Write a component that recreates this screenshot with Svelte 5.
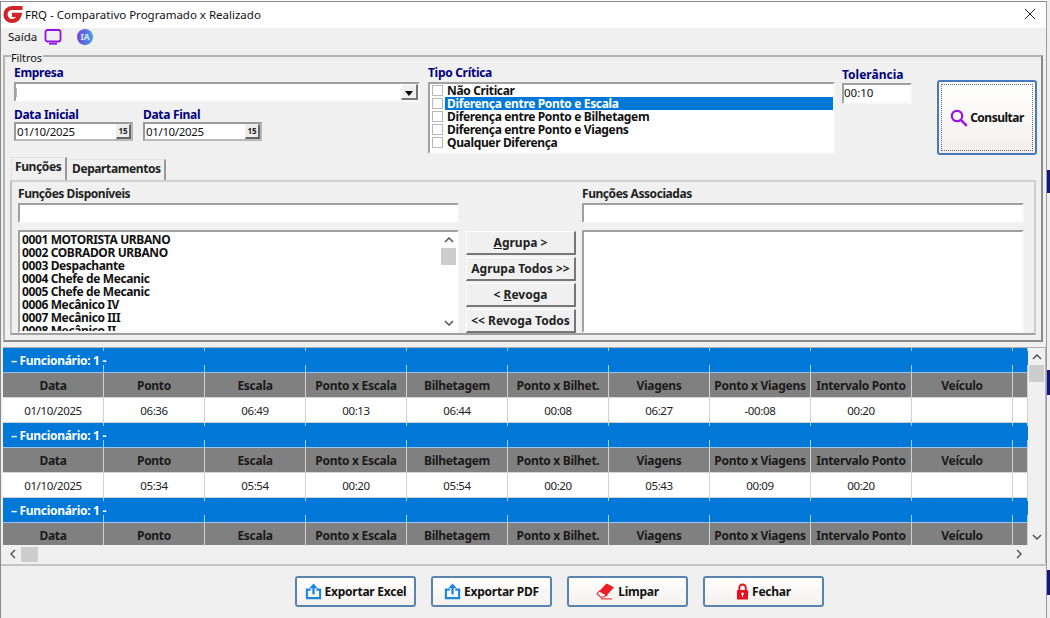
<script>
  const cols = ['Data','Ponto','Escala','Ponto x Escala','Bilhetagem','Ponto x Bilhet.','Viagens','Ponto x Viagens','Intervalo Ponto','Veículo',''];
  const groups = [
    ['01/10/2025','06:36','06:49','00:13','06:44','00:08','06:27','-00:08','00:20','',''],
    ['01/10/2025','05:34','05:54','00:20','05:54','00:20','05:43','00:09','00:20','',''],
    null
  ];
  const criticas = ['Não Criticar','Diferença entre Ponto e Escala','Diferença entre Ponto e Bilhetagem','Diferença entre Ponto e Viagens','Qualquer Diferença'];
  const funcoes = ['0001 MOTORISTA URBANO','0002 COBRADOR URBANO','0003 Despachante','0004 Chefe de Mecanic','0005 Chefe de Mecanic','0006 Mecânico IV','0007 Mecânico III','0008 Mecânico II'];
</script>

<div class="page">
<div class="window">
  <header class="title">
    <svg class="logo" viewBox="0 0 20 20" width="20" height="20"><path d="M19.500 4H9C5 4 2.500 6.800 2.500 10.500S5.500 17 9 17C13 17 15.500 14.500 16.500 10.800H9" fill="none" stroke="#d3232a" stroke-width="4.200"/></svg>
    <span>FRQ - Comparativo Programado x Realizado</span>
    <svg class="close" viewBox="0 0 12 12" width="12" height="12"><path d="M1 1l10 10M11 1L1 11" stroke="#222" stroke-width="1"/></svg>
  </header>

  <div class="toolbar">
    <span class="said">Saída</span>
    <svg viewBox="0 0 18 16" width="18" height="16"><rect x="1.500" y="1" width="15" height="11.500" rx="2" fill="none" stroke="#8f12e0" stroke-width="1.800"/><path d="M5 14.700h8" stroke="#8f12e0" stroke-width="1.800"/></svg>
    <span class="ia">IA</span>
  </div>

  <section class="filtros">
    <span class="legend">Filtros</span>
    <div class="top">
      <div class="col-a">
        <label class="lbl">Empresa</label>
        <div class="combo sunken"><span class="caret"></span><span class="arrow"></span></div>
        <div class="dates">
          <div>
            <label class="lbl">Data Inicial</label>
            <div class="date sunken"><span>01/10/2025</span><i>15</i></div>
          </div>
          <div>
            <label class="lbl">Data Final</label>
            <div class="date sunken"><span>01/10/2025</span><i>15</i></div>
          </div>
        </div>
      </div>
      <div class="col-b">
        <label class="lbl">Tipo Crítica</label>
        <div class="checks sunken">
          {#each criticas as c, i}
            <div class="chk"><b></b><span class:sel={i === 1}>{c}</span></div>
          {/each}
        </div>
      </div>
      <div class="col-c">
        <label class="lbl">Tolerância</label>
        <div class="tol sunken">00:10</div>
      </div>
      <button class="consultar">
        <span class="dots">
          <svg viewBox="0 0 18 18" width="18" height="18"><circle cx="7" cy="7" r="5.200" fill="none" stroke="#9a12e0" stroke-width="2.200"/><path d="M10.800 10.800l6 6" stroke="#9a12e0" stroke-width="2.500"/></svg>
          Consultar
        </span>
      </button>
    </div>

    <div class="tabs">
      <span class="tab on">Funções</span>
      <span class="tab">Departamentos</span>
    </div>
    <div class="panel">
      <div class="side">
        <label class="lbl2">Funções Disponíveis</label>
        <div class="inp sunken"></div>
        <div class="list sunken">
          <div class="items">
            {#each funcoes as f}<div>{f}</div>{/each}
          </div>
          <div class="vbar">
            <svg viewBox="0 0 10 6" width="10" height="6"><path d="M1 5l4-4 4 4" fill="none" stroke="#555" stroke-width="1.500"/></svg>
            <span class="thumb"></span>
            <svg class="end" viewBox="0 0 10 6" width="10" height="6"><path d="M1 1l4 4 4-4" fill="none" stroke="#555" stroke-width="1.500"/></svg>
          </div>
        </div>
      </div>
      <div class="mid">
        <button class="act"><span><u>A</u>grupa &gt;</span></button>
        <button class="act">Agrupa Todos &gt;&gt;</button>
        <button class="act"><span>&lt; <u>R</u>evoga</span></button>
        <button class="act">&lt;&lt; Revoga Todos</button>
      </div>
      <div class="side">
        <label class="lbl2">Funções Associadas</label>
        <div class="inp sunken"></div>
        <div class="list sunken"></div>
      </div>
    </div>
  </section>

  <section class="grid">
    <div class="body">
      <div class="rows">
        {#each groups as g}
          <div class="row grp">
            {#each cols as c, i}<div class="cell">{#if i === 0}<span>– Funcionário: 1 -</span>{/if}</div>{/each}
          </div>
          <div class="row hd">
            {#each cols as c}<div class="cell">{c}</div>{/each}
          </div>
          {#if g}
            <div class="row data">
              {#each g as v}<div class="cell">{v}</div>{/each}
            </div>
          {/if}
        {/each}
      </div>
      <div class="gvbar">
        <svg viewBox="0 0 10 6" width="10" height="6"><path d="M1 5l4-4 4 4" fill="none" stroke="#555" stroke-width="1.500"/></svg>
        <span class="gthumb"></span>
        <svg class="end" viewBox="0 0 10 6" width="10" height="6"><path d="M1 1l4 4 4-4" fill="none" stroke="#555" stroke-width="1.500"/></svg>
      </div>
    </div>
    <div class="hbar">
      <svg viewBox="0 0 6 10" width="6" height="10"><path d="M5 1L1 5l4 4" fill="none" stroke="#555" stroke-width="1.500"/></svg>
      <span class="hthumb"></span>
      <svg class="end" viewBox="0 0 6 10" width="6" height="10"><path d="M1 1l4 4-4 4" fill="none" stroke="#555" stroke-width="1.500"/></svg>
    </div>
  </section>

  <footer class="foot">
    <button class="fbtn">
      <svg viewBox="0 0 18 18" width="17" height="17"><path d="M6 7H2v9h14V7h-4" fill="none" stroke="#1a86e0" stroke-width="2.200"/><path d="M9 12V4" stroke="#1a86e0" stroke-width="2.400"/><path d="M9 0.500L13.500 5.500h-9z" fill="#1a86e0"/></svg>
      Exportar Excel
    </button>
    <button class="fbtn">
      <svg viewBox="0 0 18 18" width="17" height="17"><path d="M6 7H2v9h14V7h-4" fill="none" stroke="#1a86e0" stroke-width="2.200"/><path d="M9 12V4" stroke="#1a86e0" stroke-width="2.400"/><path d="M9 0.500L13.500 5.500h-9z" fill="#1a86e0"/></svg>
      Exportar PDF
    </button>
    <button class="fbtn">
      <svg viewBox="0 0 20 18" width="19" height="17"><path d="M11 0.500l8 4-7.500 8.500-8-4.500z" fill="#ee1c25"/><path d="M3.500 8.500L1 11.300l4 3.700h2l4.500-2z" fill="#fff" stroke="#ee1c25" stroke-width="1.100"/><path d="M5 16.800h12" stroke="#ee1c25" stroke-width="1.100"/></svg>
      Limpar
    </button>
    <button class="fbtn">
      <svg viewBox="0 0 14 18" width="13" height="17"><path d="M3.500 8V5a3.500 3.500 0 0 1 7 0v3" fill="none" stroke="#e8101c" stroke-width="2"/><rect x="1" y="7.500" width="12" height="10" rx="1" fill="#e8101c"/><circle cx="7" cy="11.500" r="1.400" fill="#fff"/><path d="M7 12v3" stroke="#fff" stroke-width="1.200"/></svg>
      Fechar
    </button>
  </footer>
</div>
<div class="behind">
  <div class="gap1"></div><div class="navy n1"></div><div class="gap2"></div><div class="navy n2"></div><div class="gap3"></div><div class="navy n2"></div>
</div>
</div>

<style>
  :global(body) { margin: 0; background: #fff; overflow: hidden; }
  .page { display: flex; width: 1050px; height: 618px; overflow: hidden; }
  .behind { flex: 1; background: #efefef; }
  .gap1 { height: 170px; }
  .gap2 { height: 177px; }
  .gap3 { height: 175px; }
  .navy { background: #14148a; }
  .n1 { height: 23px; }
  .n2 { height: 25px; }
  .window {
    width: 1047px; height: 617px; margin-top: 1px; flex: none; box-sizing: border-box; overflow: hidden;
    background: #f0f0f0; border-left: 1px solid #8a8a8a; border-right: 1px solid #9a9a9a; border-top: 1px solid #8a8a8a;
    font-family: "Noto Sans", "DejaVu Sans", sans-serif; font-size: 12px; color: #111;
    display: flex; flex-direction: column;
  }
  .title { height: 26px; box-sizing: border-box; background: #fff; display: flex; align-items: center; padding: 0 10px 2px 2px; gap: 2px; flex: none; font-size: 11.500px; }
  .title span { flex: 1; }
  .logo { flex: none; }
  .toolbar { height: 21px; flex: none; box-sizing: border-box; display: flex; align-items: center; padding: 0 0 4px 7px; font-size: 11.500px; }
  .said { width: 36px; }
  .ia {
    width: 16px; height: 16px; border-radius: 50%; margin-left: 15px;
    background: linear-gradient(90deg, #7a3fe0, #3fa4e0); color: #d8ecff;
    font-size: 8.500px; font-weight: 700; display: flex; align-items: center; justify-content: center;
  }
  .sunken { box-sizing: border-box; background: #fff; border: 2px solid; border-color: #a0a0a0 #f8f8f8 #f8f8f8 #a0a0a0; }
  .lbl { display: block; font-weight: 700; color: #00007f; font-size: 12px; line-height: 14px; letter-spacing: -.3px; }
  .lbl2 { display: block; font-weight: 700; font-size: 12px; line-height: 14px; color: #222; letter-spacing: -.45px; }

  .filtros {
    position: relative; flex: none; box-sizing: border-box; height: 287px; margin: 6px 3px 0 2px;
    border: 2px solid; border-color: #b4b4b4 #8a8a8a #8a8a8a #b4b4b4; padding: 9px 6px 0 7px;
  }
  .legend { position: absolute; left: 6px; top: -5px; background: #f0f0f0; line-height: 12px; font-size: 11px; letter-spacing: -.1px; padding-right: 1px; }
  .top { display: flex; height: 91px; }
  .col-a { width: 406px; flex: none; margin-left: 2px; }
  .combo { height: 20px; margin-top: 2px; position: relative; }
  .caret { position: absolute; left: 0; top: 4px; height: 9px; width: 1px; background: #c9a9c9; }
  .arrow {
    position: absolute; right: 0; top: 0; bottom: 0; width: 17px; background: #f0f0f0; box-sizing: border-box;
    border: 1px solid; border-width: 1px 2px 2px 1px; border-color: #fff #777 #777 #fff;
  }
  .arrow::after {
    content: ""; position: absolute; left: 3px; top: 6px;
    border-left: 4px solid transparent; border-right: 4px solid transparent; border-top: 5px solid #000;
  }
  .dates { display: flex; gap: 10px; margin-top: 6px; }
  .date { width: 119px; height: 19px; display: flex; align-items: center; justify-content: space-between; padding-left: 1px; font-size: 11.500px; letter-spacing: -.35px; line-height: 14px; border-color: #9a9a9a #b8b8b8 #b8b8b8 #9a9a9a; }
  .date i {
    font-style: normal; font-size: 8px; font-weight: 700; letter-spacing: 0; line-height: 12px; width: 15px; height: 15px; text-align: center;
    background: #ececec; border: 1px solid; border-width: 1px 2px 2px 1px; border-color: #eee #666 #666 #eee; box-sizing: border-box; color: #222;
  }
  .col-b { width: 407px; flex: none; margin-left: 8px; }
  .checks { height: 72px; margin-top: 2px; padding-top: 0; }
  .chk { display: flex; align-items: center; height: 13px; font-weight: 700; line-height: 13px; gap: 1px; letter-spacing: -.35px; }
  .chk b { width: 11px; height: 11px; box-sizing: border-box; border: 1px solid #b8b8b8; background: #fff; margin-right: 1px; flex: none; margin-left: 2px; }
  .chk span { flex: 1; padding-left: 2px; }
  .chk span.sel { background: #0078d7; color: #fff; }
  .col-c { width: 70px; flex: none; margin-left: 7px; }
  .col-c .lbl { margin-top: 2px; letter-spacing: 0; }
  .tol { height: 21px; margin-top: 1px; padding-left: 0; font-size: 11.500px; line-height: 16px; }
  .consultar {
    width: 100px; height: 75px; margin: 14px 0 0 25px; box-sizing: border-box; padding: 2px; flex: none;
    border: 2px solid #4a78c0; border-radius: 3px; background: linear-gradient(#fff, #f2efec);
    font: 700 12px "Noto Sans", "DejaVu Sans", sans-serif; letter-spacing: -.5px; color: #111;
  }
  .dots {
    display: flex; height: 100%; box-sizing: border-box; align-items: center; justify-content: center; gap: 2px;
    border: 1px dotted #666;
  }

  .tabs { display: flex; height: 23px; align-items: flex-end; padding-left: 0; }
  .tab { font-weight: 700; color: #222; letter-spacing: -.4px; box-sizing: border-box; padding: 0 3px 0 5px; height: 21px; line-height: 18px; border-right: 2px solid #999; border-top: 1px solid #e2e2e2; }
  .tab.on { height: 23px; line-height: 18px; padding: 0 0 0 3px; width: 56px; border-left: 1px solid #e2e2e2; margin-left: -1px; }
  .panel {
    box-sizing: border-box; height: 155px; border: 2px solid; border-color: #d0d0d0 #cfcfcf #a0a0a0 #c0c0c0; padding: 5px 12px 0 6px; overflow: hidden;
    display: flex; gap: 7px; margin-left: -2px; margin-right: -1px;
  }
  .side { width: 441px; flex: none; }
  .side:last-child { width: 442px; margin-left: -1px; }
  .inp { height: 20px; margin-top: 2px; }
  .list { height: 103px; margin-top: 7px; display: flex; }
  .items { flex: 1; overflow: hidden; font-weight: 700; line-height: 13px; letter-spacing: -.38px; padding: 1px 0 0 2px; color: #111; }
  .vbar { width: 17px; flex: none; display: flex; flex-direction: column; align-items: center; padding: 5px 0; box-sizing: border-box; background: #fff; }
  .thumb { width: 15px; height: 17px; background: #cdcdcd; margin-top: 5px; }
  .vbar .end { margin-top: auto; }
  .mid { width: 110px; flex: none; display: flex; flex-direction: column; gap: 2px; padding-top: 44px; }
  .act {
    height: 24px; box-sizing: border-box; padding: 0; background: #f0f0f0; flex: none;
    border: 1px solid; border-width: 1px 2px 2px 1px; border-color: #fff #777 #777 #fff;
    font: 700 12px "Noto Sans", "DejaVu Sans", sans-serif; color: #222;
  }

  .grid { flex: none; box-sizing: border-box; margin: 5px 0 0 2px; height: 216px; border-top: 1px solid #b0b0b0; border-right: 1px solid #b4b4b4; }
  .body { height: 197px; display: flex; overflow: hidden; }
  .rows { width: 1025px; flex: none; overflow: hidden; }
  .row { display: grid; grid-template-columns: repeat(10, 101px) 15px; height: 25px; box-sizing: border-box; }
  .cell { box-sizing: border-box; display: flex; align-items: center; justify-content: center; border-right: 1px solid #d0d0d0; min-width: 0; white-space: nowrap; }
  .grp { background: #0078d7; color: #fff; font-weight: 700; letter-spacing: -.3px; border-bottom: 1px solid #9cc4e8; }
  .grp .cell { border-right: 0; position: relative; justify-content: flex-start; }
  .grp .cell::before, .grp .cell::after { content: ""; position: absolute; right: 0; width: 1px; background: #a9cdee; }
  .grp .cell::before { top: 0; height: 3px; }
  .grp .cell::after { bottom: 0; height: 7px; }
  .grp .cell span { padding-left: 8px; position: relative; z-index: 1; }
  .hd { background: #808080; color: #1a1a1a; font-weight: 700; letter-spacing: -.3px; border-bottom: 1px solid #d6d6d6; }
  .data { background: #fff; border-bottom: 1px solid #d0d0d0; font-size: 11.500px; letter-spacing: -.35px; color: #222; }
  .gvbar { flex: 1; background: #f0f0f0; display: flex; flex-direction: column; align-items: center; padding: 6px 0 5px; box-sizing: border-box; }
  .gthumb { width: 15px; height: 17px; background: #cdcdcd; margin-top: 5px; }
  .gvbar .end { margin-top: auto; }
  .hbar { height: 18px; display: flex; align-items: center; padding: 0 5px 0 7px; background: #f0f0f0; }
  .hthumb { width: 17px; height: 15px; background: #cdcdcd; margin-left: 5px; }
  .hbar .end { margin-left: auto; margin-right: 18px; }

  .foot {
    flex: 1; border-top: 2px solid #c4c4c4; margin-top: 1px; display: flex; justify-content: flex-start; gap: 15px; padding: 10px 0 0 294px; box-sizing: border-box; align-items: flex-start;
  }
  .fbtn {
    width: 121px; height: 31px; flex: none; box-sizing: border-box; padding: 0; display: flex; align-items: center; justify-content: center; gap: 3px;
    border: 2px solid #5a84ad; border-radius: 3px; background: linear-gradient(#fff, #f3f0ed);
    font: 700 12px "Noto Sans", "DejaVu Sans", sans-serif; letter-spacing: -.25px; color: #111;
  }
</style>
